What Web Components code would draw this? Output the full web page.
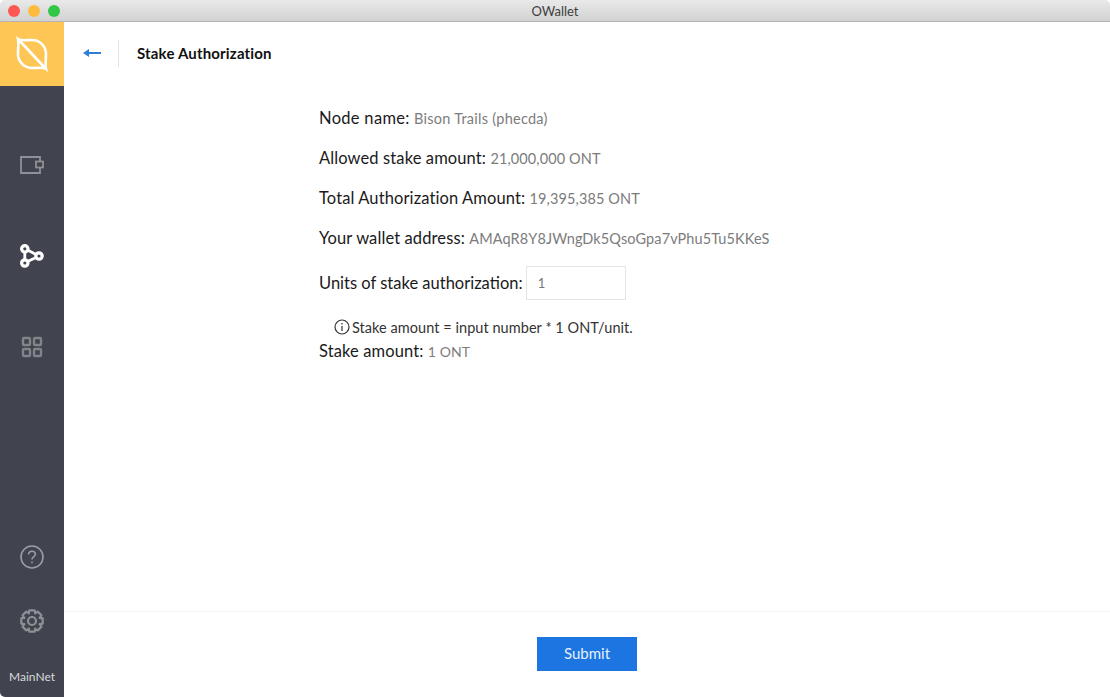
<!DOCTYPE html>
<html>
<head>
<meta charset="utf-8">
<title>OWallet</title>
<style>
html, body { margin: 0; padding: 0; background: #fff; }
body { width: 1110px; height: 697px; overflow: hidden; font-family: "Lato", "Liberation Sans", sans-serif; }
</style>
</head>
<body>
<owallet-window>
  <stake-form></stake-form>
</owallet-window>

<script>
class TitleBar extends HTMLElement {
    constructor() {
        super();
        this.shadowDOM = this.attachShadow({ mode: "open" });
        this.shadowDOM.innerHTML = `<style>
:host{
    display:flex;
    align-items:center;
    justify-content:center;
    position:relative;
    height:22px;
    box-sizing:border-box;
    background:linear-gradient(#e9e9e9,#d2d2d2);
    border-bottom:1px solid #b4b4b4;
    font:13px "Lato",sans-serif;
    color:#3e3e3e;
}
.lights{
    position:absolute;
    left:8px;
    top:5px;
    display:flex;
    gap:8px;
}
.lights i{
    width:12px;
    height:12px;
    border-radius:50%;
}
</style>
<div class="lights">
    <i style="background:#fc5753"></i>
    <i style="background:#fdbc40"></i>
    <i style="background:#33c748"></i>
</div>
<span>OWallet</span>`;
    }
}

// 8 tooth gear outline, centred on 12,12
function gearPath() {
    let d = "";
    for (let i = 0; i < 8; i++) {
        const a = i * Math.PI / 4;
        const pts = [[-.42, 8.4], [-.24, 11], [.24, 11], [.42, 8.4]];
        pts.forEach(([off, r]) => {
            const x = 12 + r * Math.cos(a + off);
            const y = 12 + r * Math.sin(a + off);
            d += (d ? "L" : "M") + x.toFixed(2) + " " + y.toFixed(2) + " ";
        });
    }
    return d + "Z";
}

class SideNav extends HTMLElement {
    constructor() {
        super();
        this.shadowDOM = this.attachShadow({ mode: "open" });
        this.shadowDOM.innerHTML = `<style>
:host{
    display:flex;
    flex-direction:column;
    width:64px;
    flex:none;
    background:#41444e;
    font:12px "Lato",sans-serif;
    color:#d8d9dc;
}
svg{ display:block; fill:none; }
.logo{
    height:64px;
    background:#fdc655;
    display:flex;
    align-items:center;
    justify-content:center;
}
.item{
    height:91px;
    display:flex;
    align-items:center;
    justify-content:center;
}
.top{ flex:1; padding-top:33px; }
.net{
    text-align:center;
    height:40px;
    padding-top:4px;
    line-height:40px;
}
.low{ height:64px; display:flex; align-items:center; justify-content:center; }
</style>
<div class="logo">
    <svg width="32" height="36" viewBox="0 0 32 36" stroke="#fff" stroke-width="2.6">
        <path d="M2 3 C5 5 9 4 16 4 A14 14 0 0 1 30 18 C30 25 29 29 30 33 C27 31 23 32 16 32 A14 14 0 0 1 2 18 C2 11 3 7 2 3 Z M2 3 L30 33"/>
    </svg>
</div>
<div class="top">
    <div class="item">
        <svg width="24" height="18" viewBox="0 0 24 18" stroke="#8f9196" stroke-width="1.8">
            <path d="M20 5 V1 H1 V17 H20 V12"/>
            <rect x="16" y="5.5" width="7" height="6"/>
        </svg>
    </div>
    <div class="item">
        <svg width="24" height="24" viewBox="0 0 24 24" stroke="#fff" stroke-width="3.2">
            <circle cx="4.8" cy="4.8" r="3.2"/>
            <circle cx="4.8" cy="19" r="3.2"/>
            <circle cx="19" cy="12" r="3.2"/>
            <path d="M4.8 7 V16.6 M7 5.8 L16.6 10.8 M7 17.8 L16.6 13.2" stroke-width="2.8"/>
        </svg>
    </div>
    <div class="item">
        <svg width="22" height="22" viewBox="0 0 22 22" stroke="#82848a" stroke-width="2.4">
            <rect x="2" y="2" width="7" height="7" rx="1"/>
            <rect x="13" y="2" width="7" height="7" rx="1"/>
            <rect x="2" y="13" width="7" height="7" rx="1"/>
            <rect x="13" y="13" width="7" height="7" rx="1"/>
        </svg>
    </div>
</div>
<div class="low">
    <svg width="24" height="24" viewBox="0 0 24 24" stroke="#9a9ca1" stroke-width="1.6">
        <circle cx="12" cy="12" r="11"/>
        <path d="M8.6 9.4 C8.6 7.4 10 6.2 12 6.2 C14 6.2 15.4 7.4 15.4 9.2 C15.4 11.6 12 11.8 12 14.6"/>
        <path d="M12 16.4 V18.2"/>
    </svg>
</div>
<div class="low">
    <svg width="24" height="24" viewBox="0 0 24 24" stroke="#8e9095" stroke-width="2.2">
        <path d="${gearPath()}" stroke-linejoin="round"/>
        <circle cx="12" cy="12" r="4"/>
    </svg>
</div>
<div class="net">MainNet</div>`;
    }
}

class PageHeader extends HTMLElement {
    constructor() {
        super();
        this.shadowDOM = this.attachShadow({ mode: "open" });
        this.shadowDOM.innerHTML = `<style>
:host{
    display:flex;
    align-items:center;
    height:64px;
    box-sizing:border-box;
    flex:none;
    padding:0 0 2px 19px;
}
svg{ display:block; width:18px; height:10px; }
.sep{
    width:1px;
    height:27px;
    background:#e3e3e3;
    margin:0 18px 0 17px;
}
h1{
    margin:0;
    font:700 15px "Lato",sans-serif;
    letter-spacing:.17px;
    color:#111;
}
</style>
<svg viewBox="0 0 18 10"><path d="M0 5 L6 1 V4 H18 V6 H6 V9 Z" fill="#2f7fd8"/></svg>
<div class="sep"></div>
<h1><slot></slot></h1>`;
    }
}

class InfoRow extends HTMLElement {
    constructor() {
        super();
        this.shadowDOM = this.attachShadow({ mode: "open" });
        this.shadowDOM.innerHTML = `<style>
:host{
    display:block;
    height:40px;
    white-space:nowrap;
    font:16.5px/40px "Lato",sans-serif;
    letter-spacing:.11px;
    color:#1a1a1a;
}
span{
    font-size:14.5px;
    letter-spacing:var(--value-spacing,.1px);
    color:#7c7c7c;
}
</style>
<slot name="label"></slot> <span><slot></slot></span>`;
    }
}

class StakeForm extends HTMLElement {
    constructor() {
        super();
        this.shadowDOM = this.attachShadow({ mode: "open" });
        this.shadowDOM.innerHTML = `<style>
:host{
    display:flex;
    flex-direction:column;
    flex:1;
    min-height:0;
}
.body{
    flex:1;
    padding:12px 0 0 255px;
    font:16.5px "Lato",sans-serif;
    letter-spacing:.11px;
    color:#1a1a1a;
}
.node{ --value-spacing:.26px; }
.node span{ letter-spacing:.3px; }
.units{
    display:flex;
    align-items:center;
    height:34px;
    margin-top:8px;
    white-space:pre;
    letter-spacing:0;
}
input{
    box-sizing:border-box;
    width:100px;
    height:34px;
    margin-left:-1px;
    padding:0 11px;
    border:1px solid #e4e4e4;
    border-radius:0;
    outline:none;
    font:13px "Lato",sans-serif;
    color:#777;
}
.note{
    display:flex;
    align-items:center;
    gap:2px;
    height:20px;
    margin:17px 0 0 15px;
    font-size:14.5px;
    letter-spacing:.05px;
    color:#333;
}
.note svg{ display:block; }
.stake{
    height:28px;
    line-height:28px;
    white-space:nowrap;
}
.stake span{ font-size:14px; color:#7c7c7c; }
.foot{
    height:86px;
    box-sizing:border-box;
    flex:none;
    padding-bottom:1px;
    border-top:1px solid #f4f4f4;
    display:flex;
    justify-content:center;
    align-items:center;
}
button{
    width:100px;
    height:34px;
    border:0;
    padding:0 0 2px;
    background:#1c75e0;
    color:#e6f0fc;
    font:15px "Lato",sans-serif;
}
</style>
<page-header>Stake Authorization</page-header>
<div class="body">
    <info-row class="node"><span slot="label">Node name:</span>Bison Trails (phecda)</info-row>
    <info-row><span slot="label">Allowed stake amount:</span>21,000,000 ONT</info-row>
    <info-row><span slot="label">Total Authorization Amount:</span>19,395,385 ONT</info-row>
    <info-row><span slot="label">Your wallet address:</span>AMAqR8Y8JWngDk5QsoGpa7vPhu5Tu5KKeS</info-row>
    <div class="units"><span>Units of stake authorization: </span><input value="1"></div>
    <div class="note">
        <svg width="16" height="16" viewBox="0 0 16 16" fill="none" stroke="#333" stroke-width="1.2">
            <circle cx="8" cy="8" r="7"/>
            <path d="M8 7 V12 M8 4 V5.4"/>
        </svg>
        Stake amount = input number * 1 ONT/unit.
    </div>
    <div class="stake">Stake amount: <span>1 ONT</span></div>
</div>
<div class="foot"><button>Submit</button></div>`;
    }
}

class OwalletWindow extends HTMLElement {
    constructor() {
        super();
        this.shadowDOM = this.attachShadow({ mode: "open" });
        this.shadowDOM.innerHTML = `<style>
:host{
    display:flex;
    flex-direction:column;
    width:1110px;
    height:697px;
    overflow:hidden;
    border-radius:5px;
}
.main{
    flex:1;
    display:flex;
    min-height:0;
}
.content{
    flex:1;
    display:flex;
    min-width:0;
}
</style>
<title-bar></title-bar>
<div class="main">
    <side-nav></side-nav>
    <div class="content"><slot></slot></div>
</div>`;
    }
}

customElements.define('title-bar', TitleBar);
customElements.define('side-nav', SideNav);
customElements.define('page-header', PageHeader);
customElements.define('info-row', InfoRow);
customElements.define('stake-form', StakeForm);
customElements.define('owallet-window', OwalletWindow);
</script>
</body>
</html>
